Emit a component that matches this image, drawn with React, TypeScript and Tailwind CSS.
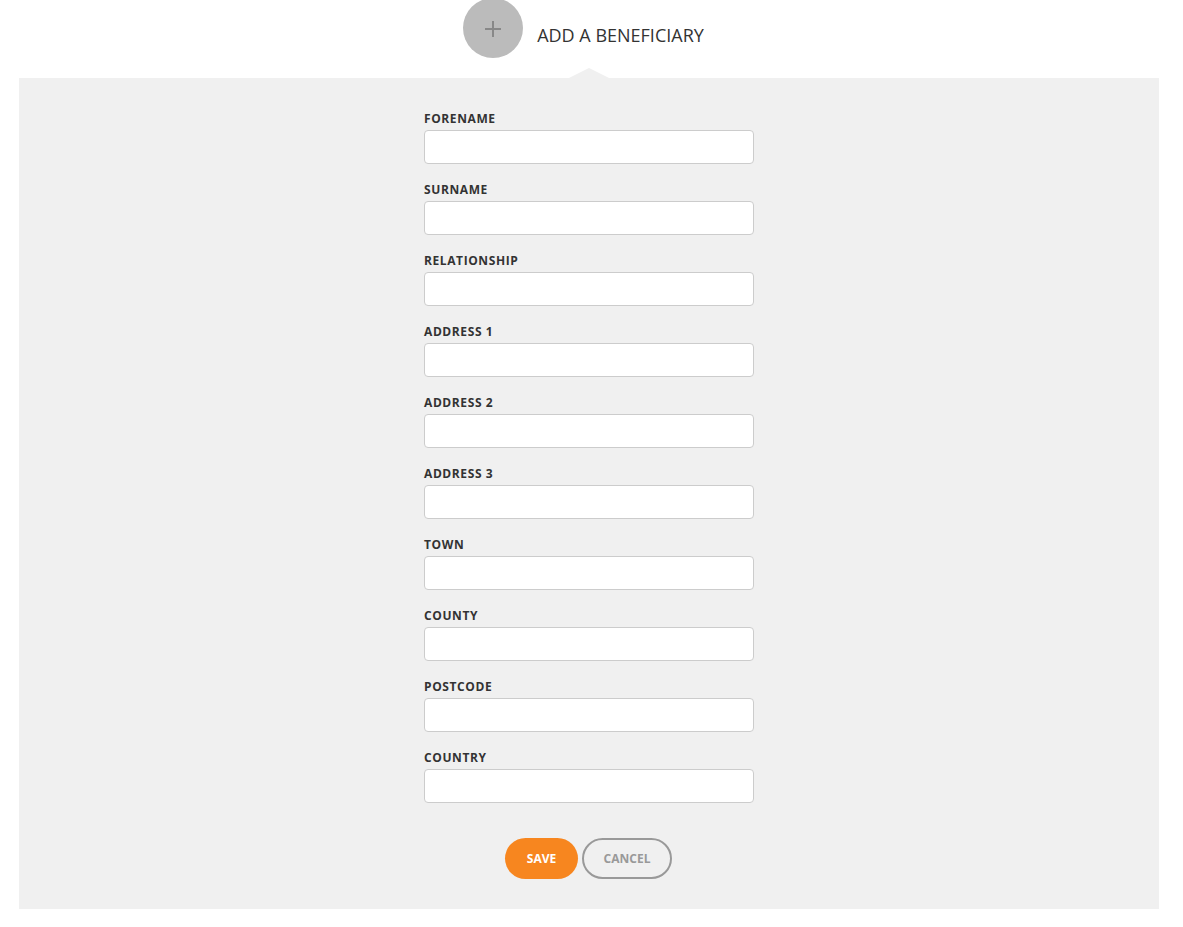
const FIELDS = [
  'Forename',
  'Surname',
  'Relationship',
  'Address 1',
  'Address 2',
  'Address 3',
  'Town',
  'County',
  'Postcode',
  'Country',
]

function Field({ label }: { label: string }) {
  const id = label.toLowerCase().replace(/\s+/g, '-')
  return (
    <div className="flex flex-col">
      <label
        htmlFor={id}
        className="mb-[3px] text-[12px] font-bold uppercase leading-[16px] tracking-[0.6px] text-[#333333]"
      >
        {label}
      </label>
      <input
        id={id}
        type="text"
        className="h-[34px] w-[330px] rounded-[4px] border border-[#cccccc] bg-white px-2 text-[14px] outline-none"
      />
    </div>
  )
}

export default function App() {
  return (
    <div
      className="min-h-[927px] bg-white"
      style={{ fontFamily: '"Open Sans", "Liberation Sans", sans-serif' }}
    >
      <div className="ml-[19px] w-[1140px]">
        {/* Heading with the round add button */}
        <div className="flex h-[78px] items-start justify-center pr-[11px]">
          <button
            type="button"
            aria-label="Add a beneficiary"
            className="-mt-[2px] flex h-[60px] w-[60px] items-center justify-center rounded-full bg-[#bbbbbb]"
          >
            <svg width="18" height="18" viewBox="0 0 18 18" className="mt-[2px]">
              <path d="M9 1v16M1 9h16" stroke="#888888" strokeWidth="2" />
            </svg>
          </button>
          <h2 className="ml-[14px] mt-[23px] text-[18px] font-normal leading-[24px] text-[#333333]">
            ADD A BENEFICIARY
          </h2>
        </div>

        {/* Form panel */}
        <div className="relative bg-[#f0f0f0] pb-[30px] pt-[33px]">
          <div className="absolute left-1/2 top-[-10px] h-0 w-0 -translate-x-1/2 border-x-[20px] border-b-[10px] border-x-transparent border-b-[#f0f0f0]" />
          <form className="mx-auto flex w-[330px] flex-col gap-[18px]">
            {FIELDS.map((f) => (
              <Field key={f} label={f} />
            ))}
          </form>
          <div className="mt-[35px] flex justify-center gap-[4px] pr-[1px]">
            <button
              type="button"
              className="h-[41px] w-[73px] rounded-full bg-[#f7861f] text-[12px] font-bold text-white"
            >
              SAVE
            </button>
            <button
              type="button"
              className="h-[41px] w-[90px] rounded-full border-2 border-[#999999] text-[12px] font-bold text-[#999999]"
            >
              CANCEL
            </button>
          </div>
        </div>
      </div>
    </div>
  )
}
